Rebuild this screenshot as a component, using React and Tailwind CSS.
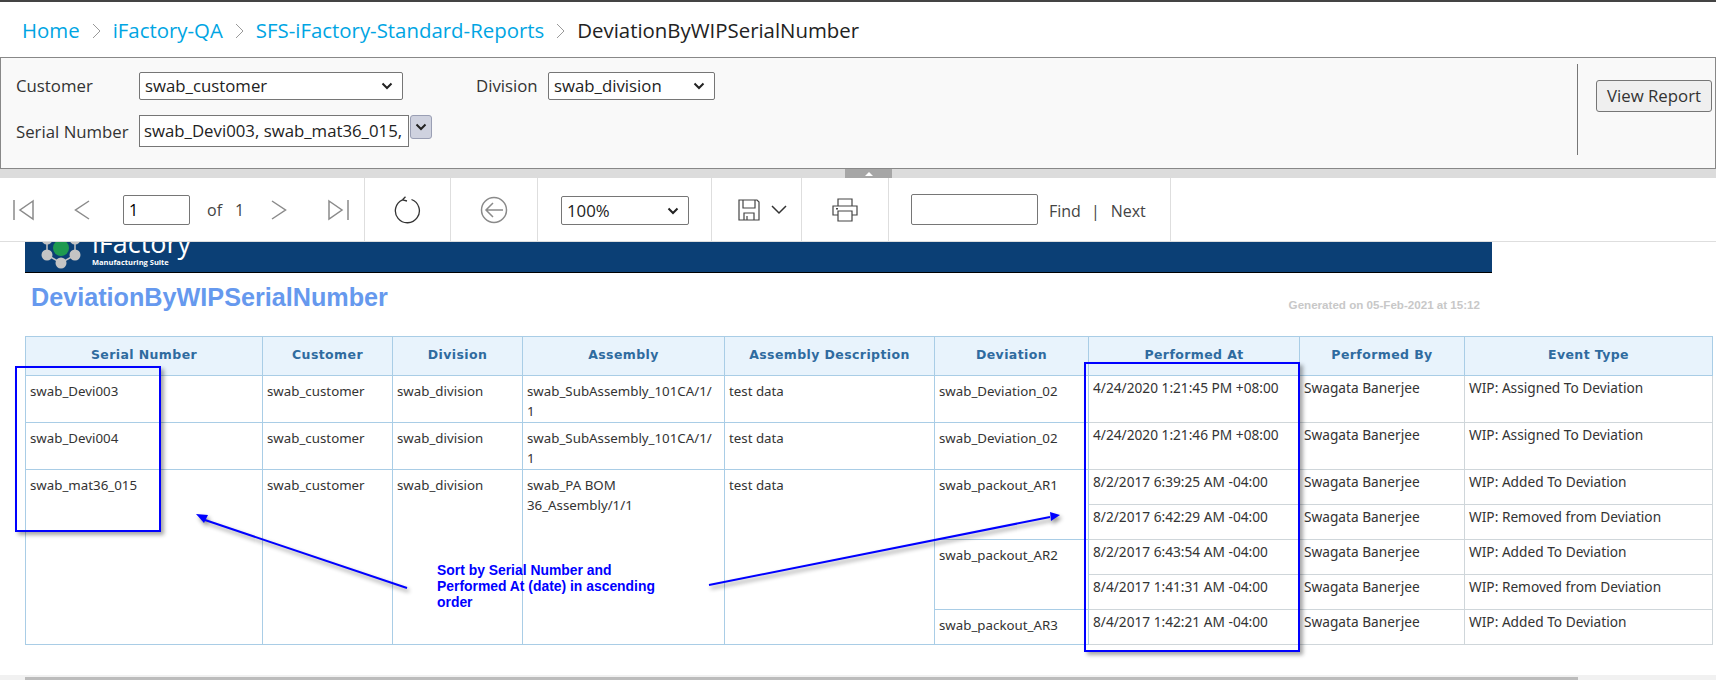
import React from 'react';

const ui = "font-['Open_Sans',sans-serif]";

const Chevron = ({ className = '' }) => (
  <svg width="12" height="8" viewBox="0 0 12 8" className={className}>
    <path d="M1.5 1.5 L6 6 L10.5 1.5" fill="none" stroke="#222" strokeWidth="2" />
  </svg>
);

const Select = ({ value, className }) => (
  <div className={`flex items-center justify-between border border-[#767676] rounded-[2px] bg-white pl-[5px] pr-[9px] text-[#222] text-[16.8px] ${className}`}>
    <span>{value}</span>
    <Chevron />
  </div>
);

const Crumb = ({ children }) => <a className="text-[#00a5e3]">{children}</a>;
const Sep = () => (
  <svg width="9" height="16" viewBox="0 0 9 16" className="mt-[2px]">
    <path d="M1 1 L8 8 L1 15" fill="none" stroke="#999" strokeWidth="1" />
  </svg>
);

const Section = ({ className, children }) => (
  <div className={`h-full flex items-center border-r border-[#dedede] ${className}`}>{children}</div>
);

const headers = ['Serial Number', 'Customer', 'Division', 'Assembly', 'Assembly Description', 'Deviation', 'Performed At', 'Performed By', 'Event Type'];
const widths = [237, 130, 130, 202, 210, 154, 211, 165, 248];

const blue = 'border border-[#a9cde6]';
const gray = 'border border-[#cfd6da]';
const leftCell = `${blue} align-top pl-[4px] pt-[5px] leading-[20px]`;
const rightCell = `${gray} align-top pl-[4px] pt-[2px] leading-[20px] text-[13.7px]`;

const events = [
  ['8/2/2017 6:39:25 AM -04:00', 'WIP: Added To Deviation'],
  ['8/2/2017 6:42:29 AM -04:00', 'WIP: Removed from Deviation'],
  ['8/2/2017 6:43:54 AM -04:00', 'WIP: Added To Deviation'],
  ['8/4/2017 1:41:31 AM -04:00', 'WIP: Removed from Deviation'],
  ['8/4/2017 1:42:21 AM -04:00', 'WIP: Added To Deviation'],
];

const deviations = { 0: ['swab_packout_AR1', 2], 2: ['swab_packout_AR2', 2], 4: ['swab_packout_AR3', 1] };

const ReportTable = () => (
  <table className="table-fixed border-collapse w-[1687px] ml-[25px] text-[13.3px] text-[#333] font-['Noto_Sans',sans-serif]">
    <colgroup>
      {widths.map((w, i) => <col key={i} style={{ width: w }} />)}
    </colgroup>
    <thead>
      <tr className="h-[39px] bg-[#e8f3fc]">
        {headers.map(h => (
          <th key={h} className={`${blue} text-center font-bold pb-[2px] text-[12.5px] tracking-[0.4px] text-[#2f6b9f] font-['DejaVu_Sans',sans-serif]`}>{h}</th>
        ))}
      </tr>
    </thead>
    <tbody>
      {['swab_Devi003', 'swab_Devi004'].map((serial, i) => (
        <tr key={serial} className="h-[47px]">
          <td className={leftCell}>{serial}</td>
          <td className={leftCell}>swab_customer</td>
          <td className={leftCell}>swab_division</td>
          <td className={leftCell}>swab_SubAssembly_101CA/1/<br />1</td>
          <td className={leftCell}>test data</td>
          <td className={leftCell}>swab_Deviation_02</td>
          <td className={rightCell}>{i === 0 ? '4/24/2020 1:21:45 PM +08:00' : '4/24/2020 1:21:46 PM +08:00'}</td>
          <td className={rightCell}>Swagata Banerjee</td>
          <td className={rightCell}>WIP: Assigned To Deviation</td>
        </tr>
      ))}
      {events.map(([at, type], i) => (
        <tr key={at} className="h-[35px]">
          {i === 0 && (
            <>
              <td rowSpan={5} className={leftCell}>swab_mat36_015</td>
              <td rowSpan={5} className={leftCell}>swab_customer</td>
              <td rowSpan={5} className={leftCell}>swab_division</td>
              <td rowSpan={5} className={leftCell}>swab_PA BOM<br />36_Assembly/1/1</td>
              <td rowSpan={5} className={leftCell}>test data</td>
            </>
          )}
          {deviations[i] && <td rowSpan={deviations[i][1]} className={leftCell}>{deviations[i][0]}</td>}
          <td className={rightCell}>{at}</td>
          <td className={rightCell}>Swagata Banerjee</td>
          <td className={rightCell}>{type}</td>
        </tr>
      ))}
    </tbody>
  </table>
);

const Toolbar = () => (
  <div className="h-[64px] flex items-stretch bg-white border-b border-[#dedede] text-[#444] text-[16px]">
    <Section className="w-[365px] pl-[13px]">
      <svg width="22" height="22" viewBox="0 0 22 22">
        <path d="M1 1 V21 M20 2 L7 11 L20 20 Z" fill="none" stroke="#8a8a8a" strokeWidth="1.5" />
      </svg>
      <svg width="16" height="22" viewBox="0 0 16 22" className="ml-[39px]">
        <path d="M15 2 L1.5 11 L15 20" fill="none" stroke="#8a8a8a" strokeWidth="1.5" />
      </svg>
      <div className="ml-[33px] w-[67px] h-[30px] border border-[#767676] rounded-[2px] flex items-center pl-[5px] text-black">1</div>
      <span className="ml-[17px]">of</span>
      <span className="ml-[13px]">1</span>
      <svg width="16" height="22" viewBox="0 0 16 22" className="ml-[27px]">
        <path d="M1 2 L14.5 11 L1 20" fill="none" stroke="#8a8a8a" strokeWidth="1.5" />
      </svg>
      <svg width="22" height="22" viewBox="0 0 22 22" className="ml-[40px]">
        <path d="M21 1 V21 M2 2 L15 11 L2 20 Z" fill="none" stroke="#8a8a8a" strokeWidth="1.5" />
      </svg>
    </Section>
    <Section className="w-[86px] justify-center">
      <svg width="28" height="28" viewBox="0 0 28 28">
        <path d="M17.5 3.5 A12 12 0 1 1 8.5 3.8 M8.5 3.8 L11.5 0.8 M8.5 3.8 L13 5" fill="none" stroke="#333" strokeWidth="1.3" />
      </svg>
    </Section>
    <Section className="w-[87px] justify-center">
      <svg width="28" height="28" viewBox="0 0 28 28">
        <circle cx="14" cy="14" r="12.5" fill="none" stroke="#8a8a8a" strokeWidth="1.5" />
        <path d="M23 14 H6 M13 7 L6 14 L13 21" fill="none" stroke="#8a8a8a" strokeWidth="1.5" />
      </svg>
    </Section>
    <Section className="w-[174px] pl-[23px]">
      <Select value="100%" className="w-[128px] h-[29px] mt-[2px]" />
    </Section>
    <Section className="w-[90px] pl-[26px] gap-[11px]">
      <svg width="22" height="22" viewBox="0 0 22 22">
        <path d="M1 1 H19 L21 3 V21 H1 Z M5 1 V9 H17 V1 M6 21 V14 H16 V21 M9 17 V21" fill="none" stroke="#444" strokeWidth="1.2" />
      </svg>
      <svg width="16" height="10" viewBox="0 0 16 10">
        <path d="M1 1 L8 8 L15 1" fill="none" stroke="#333" strokeWidth="1.5" />
      </svg>
    </Section>
    <Section className="w-[87px] justify-center">
      <svg width="26" height="24" viewBox="0 0 26 24">
        <path d="M6 8 V1 H20 V8 M6 17 H1 V8 H25 V17 H20 M6 13 H20 V23 H6 Z" fill="none" stroke="#444" strokeWidth="1.2" />
        <rect x="4" y="10" width="2" height="1.5" fill="#444" />
      </svg>
    </Section>
    <Section className="w-[282px] pl-[22px]">
      <div className="w-[127px] h-[31px] border border-[#767676] rounded-[2px]" />
      <span className="ml-[11px] mt-[3px]">Find</span>
      <span className="ml-[10px] mt-[3px]">|</span>
      <span className="ml-[11px] mt-[3px]">Next</span>
    </Section>
  </div>
);

const Banner = () => (
  <div className="ml-[25px] w-[1467px] h-[31px] bg-[#0b3f75] border-b border-black overflow-hidden flex pl-[13px]">
    <svg width="54" height="40" viewBox="0 0 54 40" className="-mt-[12px] shrink-0">
      <path d="M9 25 L23 33 L37 25 L37 11 L9 11 Z" fill="none" stroke="#c4c4c4" strokeWidth="1.5" />
      <circle cx="9" cy="25" r="5.5" fill="#c4c4c4" />
      <circle cx="37" cy="25" r="5.5" fill="#c4c4c4" />
      <circle cx="23" cy="33" r="5.5" fill="#c4c4c4" />
      <circle cx="9" cy="9" r="5.5" fill="#c4c4c4" />
      <circle cx="37" cy="9" r="5.5" fill="#c4c4c4" />
      <circle cx="23" cy="18" r="8" fill="#1f9a50" />
    </svg>
    <div className="-mt-[16px] text-white font-['Open_Sans',sans-serif]">
      <div className="text-[27px] leading-[34px]">iFactory</div>
      <div className="text-[7.5px] leading-[8px] font-bold -mt-[2px]">Manufacturing Suite</div>
    </div>
  </div>
);

const Annotations = () => (
  <>
    <div className="absolute left-[15px] top-[366px] w-[146px] h-[166px] border-[2px] border-[#0000ff] shadow-[3px_3px_4px_rgba(0,0,0,0.35)]" />
    <div className="absolute left-[1084px] top-[362px] w-[216px] h-[290px] border-[2px] border-[#0000ff] shadow-[3px_3px_4px_rgba(0,0,0,0.35)]" />
    <svg width="1716" height="680" className="absolute left-0 top-0 pointer-events-none drop-shadow-[2px_3px_2px_rgba(0,0,0,0.45)]">
      <path d="M407 588 L205 520" stroke="#0000ff" strokeWidth="2" fill="none" />
      <path d="M196 514 L208 515 L204 523 Z" fill="#0000ff" />
      <path d="M709 585 L1050 517" stroke="#0000ff" strokeWidth="2" fill="none" />
      <path d="M1060 515 L1050 512 L1051 521 Z" fill="#0000ff" />
    </svg>
    <div className="absolute left-[437px] top-[562px] w-[240px] text-[#0000ff] font-bold text-[13.9px] leading-[16px] font-['Liberation_Sans',sans-serif]">
      Sort by Serial Number and<br />Performed At (date) in ascending<br />order
    </div>
  </>
);

const App = () => (
  <div className={`relative w-[1716px] h-[680px] overflow-hidden bg-white flex flex-col ${ui}`}>
    <div className="h-[2px] bg-[#444]" />
    <div className="h-[55px] flex items-center gap-[12px] pl-[22px] pt-[1px] text-[20.4px] text-[#222]">
      <Crumb>Home</Crumb><Sep />
      <Crumb>iFactory-QA</Crumb><Sep />
      <Crumb>SFS-iFactory-Standard-Reports</Crumb><Sep />
      <span>DeviationByWIPSerialNumber</span>
    </div>
    <div className="h-[112px] border border-[#888] bg-[#f9f9f9] flex justify-between text-[16.8px] text-[#333]">
      <div className="pl-[15px] pt-[14px] flex flex-col gap-[15px]">
        <div className="flex items-center">
          <span className="w-[123px]">Customer</span>
          <Select value="swab_customer" className="w-[264px] h-[28px]" />
          <span className="ml-[73px] w-[72px]">Division</span>
          <Select value="swab_division" className="w-[167px] h-[28px]" />
        </div>
        <div className="flex items-start">
          <span className="w-[123px] mt-[4px]">Serial Number</span>
          <div className="w-[270px] h-[32px] border border-[#767676] bg-white flex items-center pl-[4px] whitespace-nowrap overflow-hidden text-[#222]">swab_Devi003, swab_mat36_015,</div>
          <div className="ml-[1px] w-[22px] h-[24px] rounded-[3px] border border-[#9a9fb4] bg-[#cfd2df] flex items-center justify-center">
            <Chevron />
          </div>
        </div>
      </div>
      <div className="flex items-stretch py-[6px]">
        <div className="w-px h-[91px] bg-[#777]" />
        <div className="w-[137px] pl-[18px] pt-[16px]">
          <div className="w-[116px] h-[32px] border border-[#767676] rounded-[3px] bg-[#efefef] flex items-center justify-center text-[#333]">View Report</div>
        </div>
      </div>
    </div>
    <div className="h-[9px] bg-[#dcdcdc] flex justify-center">
      <div className="w-[47px] h-full bg-[#a6a6a6] flex justify-center items-center ml-[21px]">
        <div className="w-0 h-0 border-x-[4px] border-x-transparent border-b-[4px] border-b-white" />
      </div>
    </div>
    <Toolbar />
    <Banner />
    <div className="flex justify-between items-start w-[1449px] ml-[31px] h-[63px]">
      <h1 className="mt-[6px] text-[25.2px] leading-[36px] font-bold text-[#6699ee] font-['Liberation_Sans',sans-serif]">DeviationByWIPSerialNumber</h1>
      <span className="mt-[23px] text-[11.6px] font-bold text-[#c8c8c8] font-['Liberation_Sans',sans-serif]">Generated on 05-Feb-2021 at 15:12</span>
    </div>
    <ReportTable />
    <div className="mt-auto h-[5px] bg-[#f1f1f1] pl-[25px]">
      <div className="mt-[2px] w-[1553px] h-[3px] bg-[#bcbcbc]" />
    </div>
    <Annotations />
  </div>
);

export default App;
